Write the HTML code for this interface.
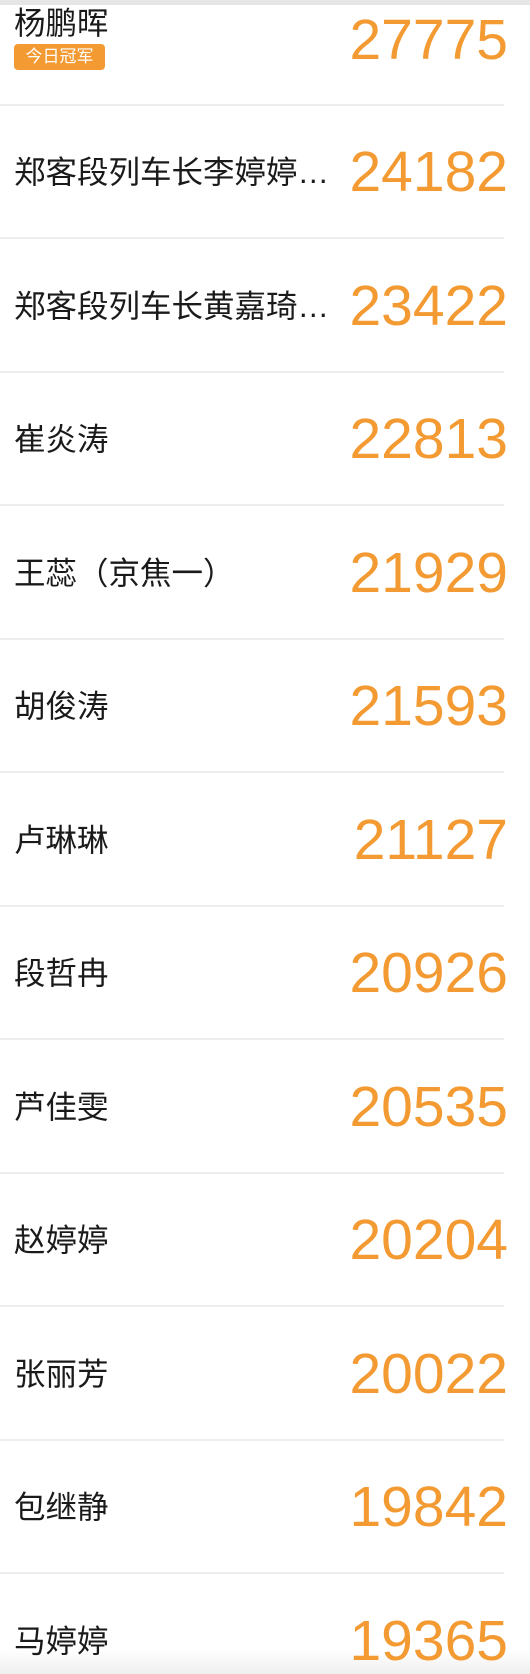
<!DOCTYPE html>
<html><head><meta charset="utf-8"><style>
html,body{margin:0;padding:0;}
body{width:530px;height:1674px;position:relative;overflow:hidden;background:#fff;font-family:"Liberation Sans","Noto Sans CJK SC",sans-serif;}
.top{position:absolute;left:0;top:0;width:530px;height:5px;background:#e6e6e6;}
.sep{position:absolute;left:0;width:504px;height:2px;background:#ededed;}
.num{position:absolute;right:22px;font-size:57px;color:#f39a33;line-height:60px;height:60px;z-index:2;}
.name{position:absolute;left:14px;font-size:31.5px;color:#1a1a1a;line-height:40px;white-space:nowrap;z-index:2;}
.badge{position:absolute;left:14px;top:44px;width:91px;height:26px;background:#f39a33;border-radius:4px;color:#fff;font-size:17px;line-height:26px;text-align:center;}
.bot{position:absolute;left:0;top:1650px;width:530px;height:24px;background:linear-gradient(#fff,#efefef);z-index:1;}
</style></head><body>
<div class="top"></div>
<div class="name" style="top:3px">杨鹏晖</div>
<div class="badge">今日冠军</div>
<div class="num" style="top:10px">27775</div>
<div class="sep" style="top:104px"></div>

<div class="name" style="top:152px">郑客段列车长李婷婷…</div>
<div class="num" style="top:142px">24182</div>
<div class="sep" style="top:237px"></div>

<div class="name" style="top:286px">郑客段列车长黄嘉琦…</div>
<div class="num" style="top:276px">23422</div>
<div class="sep" style="top:371px"></div>

<div class="name" style="top:419px">崔炎涛</div>
<div class="num" style="top:409px">22813</div>
<div class="sep" style="top:504px"></div>

<div class="name" style="top:553px">王蕊（京焦一）</div>
<div class="num" style="top:543px">21929</div>
<div class="sep" style="top:638px"></div>

<div class="name" style="top:686px">胡俊涛</div>
<div class="num" style="top:676px">21593</div>
<div class="sep" style="top:771px"></div>

<div class="name" style="top:820px">卢琳琳</div>
<div class="num" style="top:810px">21127</div>
<div class="sep" style="top:905px"></div>

<div class="name" style="top:953px">段哲冉</div>
<div class="num" style="top:943px">20926</div>
<div class="sep" style="top:1038px"></div>

<div class="name" style="top:1087px">芦佳雯</div>
<div class="num" style="top:1077px">20535</div>
<div class="sep" style="top:1172px"></div>

<div class="name" style="top:1220px">赵婷婷</div>
<div class="num" style="top:1210px">20204</div>
<div class="sep" style="top:1305px"></div>

<div class="name" style="top:1354px">张丽芳</div>
<div class="num" style="top:1344px">20022</div>
<div class="sep" style="top:1439px"></div>

<div class="name" style="top:1487px">包继静</div>
<div class="num" style="top:1477px">19842</div>
<div class="sep" style="top:1572px"></div>

<div class="name" style="top:1621px">马婷婷</div>
<div class="num" style="top:1611px">19365</div>
<div class="bot"></div>
</body></html>
